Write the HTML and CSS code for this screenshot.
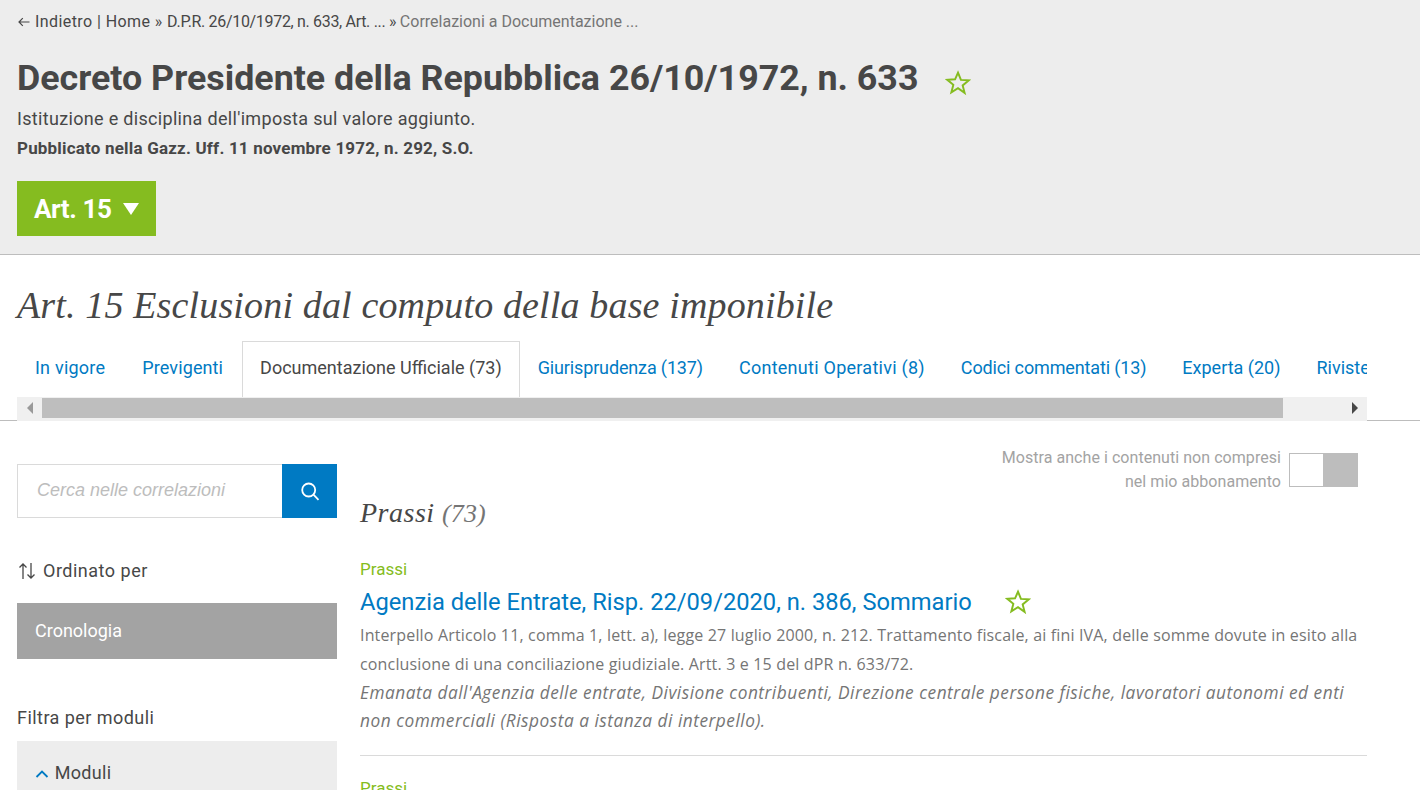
FILE: index.html
```html
<!DOCTYPE html>
<html lang="it">
<head>
    <meta charset="UTF-8">
    <meta name="viewport" content="width=device-width, initial-scale=1.0">
    <title>Art. 15 - D.P.R. 633/1972</title>
    <link rel="stylesheet" href="styles.css">
</head>
<body>
    <header class="head">
        <p class="crumbs"><svg class="back" viewBox="0 0 12 10" width="12" height="10"><path d="M11.500 5H1M4.800 1.200L1 5l3.800 3.800"/></svg><span class="crumb-home">Indietro | Home » </span><span class="crumb-doc">D.P.R. 26/10/1972, n. 633, Art. ... » </span><span class="crumb-last">Correlazioni a Documentazione ...</span></p>
        <div class="title-row">
            <h1>Decreto Presidente della Repubblica 26/10/1972, n. 633</h1>
            <svg class="star star-head" viewBox="0 0 24 24"><path d="M12 2.500l2.700 6.600 7.100.5-5.500 4.600 1.800 6.900L12 16.800l-6.100 3.800 1.800-6.900-5.500-4.600 7.100-.5z"/></svg>
        </div>
        <p class="subtitle">Istituzione e disciplina dell'imposta sul valore aggiunto.</p>
        <p class="pub">Pubblicato nella Gazz. Uff. 11 novembre 1972, n. 292, S.O.</p>
        <button class="art-btn">Art. 15 <span class="caret"></span></button>
    </header>

    <section class="art">
        <h2>Art. 15 Esclusioni dal computo della base imponibile</h2>
        <nav class="tabs">
            <a class="tab tab-first">In vigore</a>
            <a class="tab tab-second">Previgenti</a>
            <a class="tab active">Documentazione Ufficiale (73)</a>
            <a class="tab tab-tight">Giurisprudenza (137)</a>
            <a class="tab tab-loose">Contenuti Operativi (8)</a>
            <a class="tab tab-tight">Codici commentati (13)</a>
            <a class="tab">Experta (20)</a>
            <a class="tab">Riviste (45)</a>
        </nav>
        <div class="scrollbar">
            <span class="arrow arrow-left"></span>
            <div class="thumb"></div>
            <span class="arrow arrow-right"></span>
        </div>
    </section>

    <main class="columns">
        <aside class="side">
            <div class="search">
                <div class="search-input">Cerca nelle correlazioni</div>
                <button class="search-btn">
                    <svg viewBox="0 0 20 20" width="20" height="20"><circle cx="8.700" cy="9" r="6.500"/><path d="M13.500 13.700l5 5.100"/></svg>
                </button>
            </div>
            <p class="sort">
                <svg class="sort-icon" viewBox="0 0 18 18" width="18" height="18"><path d="M5 17V2M1.500 5.500L5 2l3.500 3.500M13 1v15M9.500 12.500L13 16l3.500-3.500"/></svg>
                Ordinato per
            </p>
            <div class="sort-box">Cronologia</div>
            <p class="filter">Filtra per moduli</p>
            <div class="modules">
                <svg class="chev" viewBox="0 0 14 10" width="14" height="10"><path d="M1.500 8L7 2.500 12.500 8"/></svg>
                Moduli
            </div>
        </aside>

        <div class="results">
            <div class="toggle-row">
                <p class="toggle-label">Mostra anche i contenuti non compresi<br>nel mio abbonamento</p>
                <div class="toggle"><span class="toggle-off"></span><span class="toggle-on"></span></div>
            </div>
            <h3>Prassi <span class="count">(73)</span></h3>
            <article class="item">
                <p class="kind">Prassi</p>
                <div class="item-title">
                    <a>Agenzia delle Entrate, Risp. 22/09/2020, n. 386, Sommario</a>
                    <svg class="star star-item" viewBox="0 0 24 24"><path d="M12 2.500l2.700 6.600 7.100.5-5.500 4.600 1.800 6.900L12 16.800l-6.100 3.800 1.800-6.900-5.500-4.600 7.100-.5z"/></svg>
                </div>
                <p class="desc">Interpello Articolo 11, comma 1, lett. a), legge 27 luglio 2000, n. 212. Trattamento fiscale, ai fini IVA, delle somme dovute in esito alla conclusione di una conciliazione giudiziale. Artt. 3 e 15 del dPR n. 633/72.</p>
                <p class="desc desc-em">Emanata dall'Agenzia delle entrate, Divisione contribuenti, Direzione centrale persone fisiche, lavoratori autonomi ed enti non commerciali (Risposta a istanza di interpello).</p>
            </article>
            <article class="item">
                <p class="kind">Prassi</p>
            </article>
        </div>
    </main>
</body>
</html>
```

FILE: styles.css
```css
* { margin: 0; padding: 0; box-sizing: border-box; }
html, body { height: 790px; overflow: hidden; }
body { background: #fff; color: #474747; font-family: 'Roboto', 'Open Sans', sans-serif; font-size: 16px; }

.head { background: #ededed; height: 255px; border-bottom: 1px solid #bdbdbd; padding: 13px 17px 0; }
.crumbs { font-size: 16px; line-height: 18px; color: #474747; }
.back { fill: none; stroke: #474747; stroke-width: 1.2; margin: 0 5px 0 1px; }
.crumb-home { letter-spacing: 0.42px; }
.crumb-doc { letter-spacing: -0.32px; }
.crumb-last { color: #757575; }
.title-row { display: flex; align-items: center; margin-top: 24px; height: 46px; }
h1 { font-size: 35.800px; font-weight: 700; line-height: 46px; color: #474747; white-space: nowrap; }
.star { fill: none; stroke: #85bc20; stroke-width: 1.8; }
.star-head { width: 26px; height: 26px; margin-left: 27px; margin-top: 10px; }
.subtitle { font-size: 18px; line-height: 24px; letter-spacing: 0.32px; margin-top: 6px; }
.pub { font-size: 17px; line-height: 24px; letter-spacing: 0.19px; margin-top: 5px; font-weight: 700; }
.art-btn { display: flex; align-items: center; gap: 12px; margin-top: 21px; height: 55px; width: 139px; padding-left: 17px; border: none; background: #85bc20; color: #fff; font-family: inherit; font-size: 26px; font-weight: 700; letter-spacing: -0.4px; }
.caret { width: 0; height: 0; border-left: 8px solid transparent; border-right: 8px solid transparent; border-top: 12px solid #fff; }

.art { border-bottom: 1px solid #bdbdbd; height: 166px; padding: 29px 53px 0 17px; }
h2 { font-family: 'Liberation Serif', serif; font-style: italic; font-weight: 400; font-size: 38px; line-height: 42px; letter-spacing: 0.15px; color: #474747; }
.tabs { display: flex; margin-top: 15px; height: 56px; overflow: hidden; }
.tab { flex: none; padding: 0 18px; line-height: 53px; font-size: 18px; color: #007ac3; white-space: nowrap; }
.tab.active { color: #474747; padding: 0 17px; line-height: 51px; border: 1px solid #dadada; border-bottom: none; background: #fff; }
.tab-first { padding-right: 19px; letter-spacing: 0.22px; }
.tab-second { padding-right: 19px; letter-spacing: 0.12px; }
.tab-loose { letter-spacing: 0.26px; }
.tab-tight { letter-spacing: -0.14px; }
.scrollbar { display: flex; align-items: center; height: 24px; background: #f0f0f0; position: relative; z-index: 1; }
.thumb { height: 20px; width: 1241px; margin-bottom: 2px; background: #bebebe; }
.arrow { width: 0; height: 0; margin-bottom: 2px; border-top: 6px solid transparent; border-bottom: 6px solid transparent; }
.arrow-left { border-right: 6px solid #9a9a9a; margin-left: 10px; margin-right: 9px; }
.arrow-right { border-left: 6px solid #474747; margin-left: 69px; }

.columns { display: flex; gap: 23px; padding: 43px 53px 0 17px; }
.side { width: 320px; flex: none; }
.search { display: flex; height: 54px; }
.search-input { flex: 1; border: 1px solid #dadada; border-right: none; padding-left: 19px; line-height: 50px; font-family: 'Liberation Sans', sans-serif; font-style: italic; font-size: 18px; color: #bdbdbd; }
.search-btn { width: 55px; border: none; background: #007ac3; display: flex; align-items: center; justify-content: center; }
.search-btn svg { fill: none; stroke: #fff; stroke-width: 1.8; }
.sort { display: flex; align-items: center; gap: 7px; margin-top: 41px; font-size: 18px; line-height: 24px; letter-spacing: 0.5px; }
.sort-icon { fill: none; stroke: #474747; stroke-width: 1.3; margin-left: 1px; }
.sort-box { margin-top: 20px; height: 56px; background: #a3a3a3; color: #fff; font-size: 18px; line-height: 55px; padding-left: 18px; }
.filter { margin-top: 47px; font-size: 18px; line-height: 24px; letter-spacing: 0.45px; }
.modules { margin-top: 11px; height: 80px; background: #ededed; padding: 20px 18px; font-size: 18px; line-height: 24px; letter-spacing: 0.3px; }
.chev { fill: none; stroke: #007ac3; stroke-width: 1.8; margin-right: 1px; }

.results { flex: 1; min-width: 0; }
.toggle-row { display: flex; justify-content: flex-end; gap: 8px; padding-right: 9px; height: 48px; margin-top: -18px; }
.toggle-label { text-align: right; font-size: 16px; line-height: 24px; letter-spacing: 0.05px; color: #a3a3a3; }
.toggle { display: flex; width: 69px; height: 34px; margin-top: 7px; border: 1px solid #bdbdbd; }
.toggle-off { width: 33px; background: #fff; }
.toggle-on { flex: 1; background: #bdbdbd; }
h3 { font-family: 'Liberation Serif', serif; font-style: italic; font-weight: 400; font-size: 28px; line-height: 34px; margin-top: 2px; letter-spacing: 0.5px; color: #474747; }
.count { color: #757575; font-size: 26px; letter-spacing: 0.1px; }
.item { padding-top: 26px; padding-bottom: 19px; border-bottom: 1px solid #dadada; }
.item + .item { border-bottom: none; padding-top: 20px; }
.kind { color: #85bc20; font-size: 17px; line-height: 24px; }
.item-title { display: flex; align-items: center; height: 30px; margin-top: 6px; font-size: 23.700px; color: #007ac3; white-space: nowrap; }
.star-item { width: 26px; height: 26px; margin-left: 33px; }
.desc { font-family: 'Open Sans', sans-serif; font-size: 16px; line-height: 28.800px; letter-spacing: 0.16px; color: #757575; margin-top: 4px; }
.desc-em { font-style: italic; font-size: 17.300px; letter-spacing: 0.5px; margin-top: 0; }
```
